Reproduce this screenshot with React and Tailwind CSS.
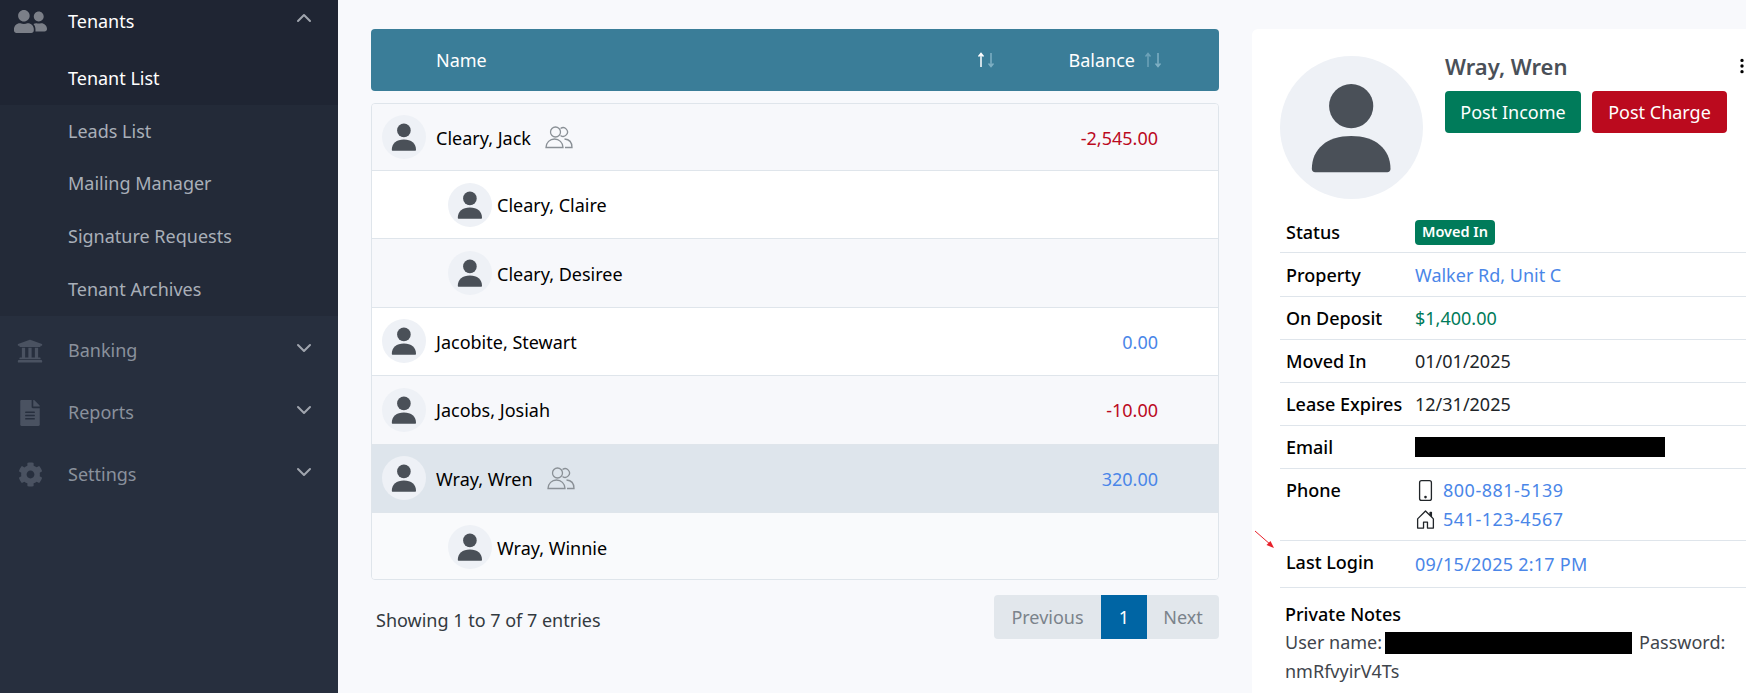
import { FaUserFriends, FaUniversity, FaFileAlt, FaCog } from "react-icons/fa";
import { ChevronUp, ChevronDown } from "lucide-react";
import { BsPhone, BsHouseDoor, BsThreeDotsVertical } from "react-icons/bs";

function Person({ className }) {
  return (
    <svg viewBox="0 0 44 44" className={className}>
      <circle cx="21.900" cy="15.400" r="6.800" fill="#4a5058" />
      <path d="M10.800 35.800c-.6 0-1-.4-1-1C9.800 28.500 14.500 24.600 21.900 24.600S34 28.500 34 34.800c0 .6-.4 1-1 1z" fill="#4a5058" />
    </svg>
  );
}

function Avatar({ big }) {
  return (
    <div className={big ? "w-[143px] h-[143px] rounded-full bg-[#eef1f6] shrink-0" : "w-11 h-11 rounded-full bg-[#eef1f6] shrink-0"}>
      <Person className={big ? "w-[143px] h-[143px]" : "w-11 h-11"} />
    </div>
  );
}

function GroupIcon() {
  return (
    <svg viewBox="0 0 28 23" className="w-7 h-[23px] ml-[14px]" fill="none" stroke="#8a9096" strokeWidth="1.300">
      <circle cx="10.500" cy="6" r="5" />
      <path d="M15.500 2.600a4.300 4.300 0 1 1 0 6.800" />
      <path d="M1 21.500c0-5 4-8.500 8.500-8.500s8.500 3.500 8.500 8.500z" />
      <path d="M19.500 13c4.500.3 7.500 3.500 7.500 8.500h-7" />
    </svg>
  );
}

function SortArrows({ up, down }) {
  return (
    <svg viewBox="0 0 20 16" className="w-5 h-4" fill="none" strokeWidth="1.500">
      <path d="M5 15V2M2.500 4.500 5 1.500l2.500 3" stroke={up} />
      <path d="M15 1v13M12.500 11.500 15 14.500l2.500-3" stroke={down} />
    </svg>
  );
}

function NavHead({ icon, label, open, active }) {
  return (
    <div className={`h-[62px] flex items-center pl-[68px] pr-[22px] relative ${active ? "text-white" : "text-[#8a919c]"}`}>
      <span className="absolute left-0 w-[60px] flex justify-center">{icon}</span>
      <span className="text-[18px] flex-1">{label}</span>
      {open ? <ChevronUp className="w-6 h-6 text-[#a0a5ae] mb-[6px]" /> : <ChevronDown className="w-6 h-6 text-[#a0a5ae] mb-[5px]" />}
    </div>
  );
}

function SubItem({ label, active }) {
  return (
    <div className={`h-[52.800px] flex items-center pl-[68px] text-[18px] ${active ? "bg-[#1f2533] text-white" : "text-[#a9afb8]"}`}>
      {label}
    </div>
  );
}

function Row({ name, balance, color, group, child, bg }) {
  return (
    <div className={`h-[68.400px] first:h-[67px] flex items-center border-b border-[#dfe5eb] last:border-b-0 ${bg} ${child ? "pl-[76px]" : "pl-[10px]"}`}>
      <Avatar />
      <span className={`text-[18px] text-black pt-[2px] ${child ? "ml-[5px]" : "ml-[10px]"}`}>{name}</span>
      {group && <GroupIcon />}
      <span className={`ml-auto mr-[60px] text-[18px] pt-[2px] ${color}`}>{balance}</span>
    </div>
  );
}

function Info({ label, children, h, top }) {
  return (
    <div className={`flex border-b border-[#dfe5eb] ${h} ${top ? "pt-[8px]" : "items-center"}`}>
      <span className="w-[135px] pl-[6px] text-[18px] font-medium text-black shrink-0">{label}</span>
      <div className="text-[18px]">{children}</div>
    </div>
  );
}

export default function App() {
  return (
    <div className="font-['Noto_Sans',sans-serif] flex h-[693px] w-[1746px] overflow-hidden bg-[#f8f9fc]">
      <aside className="w-[338px] shrink-0 bg-[#272f3e] -mt-[10px] h-[703px]">
        <div className="bg-[#1f2533]">
          <NavHead active open label="Tenants" icon={<FaUserFriends className="w-[33px] h-[33px] text-[#7b7f88]" />} />
        </div>
        <div className="bg-[#232a38] mb-[4px]">
          <SubItem active label="Tenant List" />
          <SubItem label="Leads List" />
          <SubItem label="Mailing Manager" />
          <SubItem label="Signature Requests" />
          <SubItem label="Tenant Archives" />
        </div>
        <NavHead label="Banking" icon={<FaUniversity className="w-[26px] h-[26px] text-[#4a5261]" />} />
        <NavHead label="Reports" icon={<FaFileAlt className="w-[20px] h-[26px] text-[#4a5261]" />} />
        <NavHead label="Settings" icon={<FaCog className="w-[25px] h-[25px] text-[#4a5261]" />} />
      </aside>

      <main className="w-[848px] ml-[33px] pt-[29px] shrink-0">
        <div className="h-[62px] bg-[#3a7d98] rounded flex items-center text-white text-[18px]">
          <span className="ml-[65px] flex-1">Name</span>
          <SortArrows up="#ffffff" down="#7fb0c4" />
          <span className="ml-[73px]">Balance</span>
          <span className="ml-[8px] mr-[56px]"><SortArrows up="#6da2b8" down="#7fb0c4" /></span>
        </div>
        <div className="mt-3 border border-[#dfe5eb] rounded overflow-hidden h-[477px]">
          <Row name="Cleary, Jack" balance="-2,545.00" color="text-[#bb0a1e]" group bg="bg-[#f7f8fb]" />
          <Row child name="Cleary, Claire" bg="bg-white" />
          <Row child name="Cleary, Desiree" bg="bg-[#f7f8fb]" />
          <Row name="Jacobite, Stewart" balance="0.00" color="text-[#4a86e8]" bg="bg-white" />
          <Row name="Jacobs, Josiah" balance="-10.00" color="text-[#bb0a1e]" bg="bg-[#f7f8fb]" />
          <Row name="Wray, Wren" balance="320.00" color="text-[#4a86e8]" group bg="bg-[#dee5ec]" />
          <Row child name="Wray, Winnie" bg="bg-[#f9fafc]" />
        </div>
        <div className="mt-[15px] flex items-center justify-between">
          <span className="ml-[5px] mt-[6px] text-[18px] text-[#333a40]">Showing 1 to 7 of 7 entries</span>
          <div className="flex h-[44px] rounded overflow-hidden text-[18px]">
            <span className="w-[107px] pt-[1px] bg-[#e2e7ec] text-[#7b838b] flex items-center justify-center">Previous</span>
            <span className="w-[46px] pt-[1px] bg-[#0065a4] text-white flex items-center justify-center">1</span>
            <span className="w-[72px] pt-[1px] bg-[#e2e7ec] text-[#7b838b] flex items-center justify-center">Next</span>
          </div>
        </div>
      </main>

      <section className="relative w-[494px] ml-[33px] mt-[29px] bg-white rounded-tl-md shrink-0 pl-[28px] pt-[27px]">
        <div className="flex">
          <Avatar big />
          <div className="ml-[22px] flex-1">
            <div className="flex items-center justify-between h-[24px] -mt-[2px]">
              <span className="text-[22px] font-semibold text-[#4a5058]">Wray, Wren</span>
              <BsThreeDotsVertical className="w-[18px] h-[18px] text-black mr-[-5px]" />
            </div>
            <div className="flex gap-[11px] mt-[13px]">
              <button className="w-[136px] h-[42px] rounded bg-[#007b5a] text-white text-[18px]">Post Income</button>
              <button className="w-[135px] h-[42px] rounded bg-[#bb0a1e] text-white text-[18px]">Post Charge</button>
            </div>
          </div>
        </div>
        <div className="mt-[11px]">
          <Info label="Status" h="h-[43px] pt-[2px]">
            <span className="flex items-center justify-center w-[80px] h-[25px] rounded bg-[#007b5a] text-white text-[14.500px] font-semibold">Moved In</span>
          </Info>
          <Info label="Property" h="h-[44px] pt-[2px]"><span className="text-[#4a86e8]">Walker Rd, Unit C</span></Info>
          <Info label="On Deposit" h="h-[43px]"><span className="text-[#007b5a]">$1,400.00</span></Info>
          <Info label="Moved In" h="h-[43px]"><span className="text-[#212529]">01/01/2025</span></Info>
          <Info label="Lease Expires" h="h-[43px]"><span className="text-[#212529]">12/31/2025</span></Info>
          <Info label="Email" h="h-[43px]"><div className="w-[250px] h-5 bg-black" /></Info>
          <Info label="Phone" h="h-[72px]" top>
            <div className="flex items-center gap-[7px] text-[#4a86e8] tracking-[0.5px] h-[26px]"><BsPhone className="w-[21px] h-[21px] text-[#212529]" />800-881-5139</div>
            <div className="flex items-center gap-[7px] text-[#4a86e8] tracking-[0.5px] h-[29px] mt-[2px]"><BsHouseDoor className="w-[21px] h-[21px] text-[#212529]" />541-123-4567</div>
          </Info>
          <Info label="Last Login" h="h-[47px] pb-[3px]"><span className="text-[#4a86e8] tracking-[0.25px] relative top-[2px]">09/15/2025 2:17 PM</span></Info>
        </div>
        <div className="mt-[12px] pl-[5px] text-[18px] w-[470px] leading-[29px]">
          <div className="font-medium text-black">Private Notes</div>
          <div className="text-[#3f454c] flex flex-wrap -mt-[1px]">
            <span>User name:</span>
            <span className="w-[247px] h-[22px] bg-black ml-[3px] mr-[7px] mt-[4px]" />
            <span>Password:</span>
            <span className="w-full">nmRfvyirV4Ts</span>
          </div>
        </div>
        <svg viewBox="0 0 24 22" className="absolute left-[2px] top-[501px] w-6 h-[22px]" fill="none">
          <path d="M1 1 17 15" stroke="#e8202a" strokeWidth="1" />
          <path d="M20 18 12.500 15 16.500 11z" fill="#e8202a" />
        </svg>
      </section>
    </div>
  );
}
